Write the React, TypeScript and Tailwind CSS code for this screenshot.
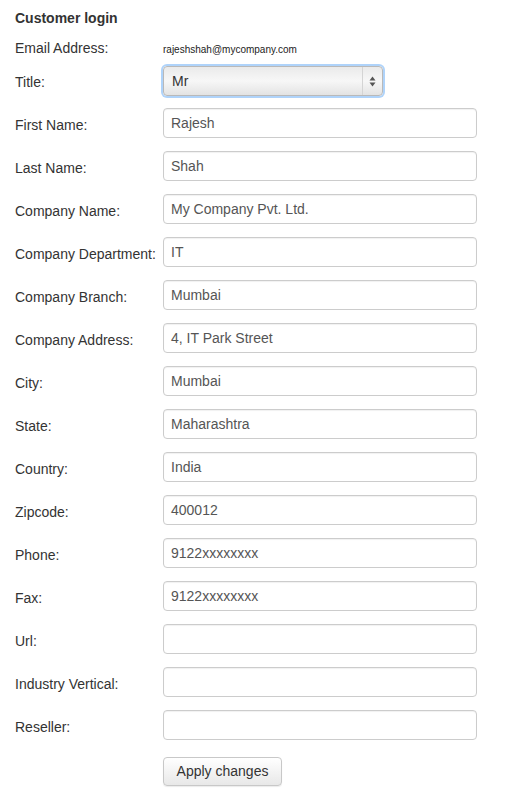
import React from "react";

const rows: [string, string][] = [
  ["First Name:", "Rajesh"],
  ["Last Name:", "Shah"],
  ["Company Name:", "My Company Pvt. Ltd."],
  ["Company Department:", "IT"],
  ["Company Branch:", "Mumbai"],
  ["Company Address:", "4, IT Park Street"],
  ["City:", "Mumbai"],
  ["State:", "Maharashtra"],
  ["Country:", "India"],
  ["Zipcode:", "400012"],
  ["Phone:", "9122xxxxxxxx"],
  ["Fax:", "9122xxxxxxxx"],
  ["Url:", ""],
  ["Industry Vertical:", ""],
  ["Reseller:", ""],
];

export default function App() {
  return (
    <div
      className="w-[507px] min-h-[792px] bg-white text-[#333] text-[14px] leading-[20px]"
      style={{ fontFamily: '"Liberation Sans", Arial, sans-serif' }}
    >
      <div className="pl-[15px] pt-[8px]">
        <div className="font-bold h-[20px]">Customer login</div>
        <div className="mt-[10px] flex items-baseline h-[20px]">
          <div className="w-[148px] shrink-0">Email Address:</div>
          <div className="text-[10px] text-[#222]">rajeshshah@mycompany.com</div>
        </div>
        <div className="mt-[8px] flex items-start h-[30px]">
          <div className="w-[148px] shrink-0 pt-[6px]">Title:</div>
          <div className="relative w-[220px] h-[30px] rounded-[4px] border border-[#b9b9b9] bg-gradient-to-b from-[#eaeaea] via-[#f7f7f7] to-[#e3e3e3] ring-[2px] ring-[#afd3fa] flex items-center">
            <div className="pl-[8px] flex-1 text-[#333]">Mr</div>
            <div className="h-full w-[20px] border-l border-[#d4d4d4] flex items-center justify-center">
              <svg width="7" height="11" viewBox="0 0 7 11">
                <path d="M3.5 0.5 L6.5 4.5 L0.5 4.5 Z" fill="#555" />
                <path d="M3.5 10.5 L6.5 6.5 L0.5 6.5 Z" fill="#555" />
              </svg>
            </div>
          </div>
        </div>
        <div className="mt-[12px] flex flex-col gap-[13px]">
          {rows.map(([label, value]) => (
            <div key={label} className="flex items-start h-[30px]">
              <div className="w-[148px] shrink-0 pt-[7px] whitespace-nowrap">{label}</div>
              <div className="w-[314px] h-[30px] rounded-[4px] border border-[#cccccc] bg-white px-[7px] pt-[4px] text-[#555] shadow-[inset_0_1px_1px_rgba(0,0,0,0.06)]">
                {value}
              </div>
            </div>
          ))}
        </div>
        <div className="mt-[17px] pl-[148px]">
          <button className="h-[29px] w-[119px] rounded-[4px] border border-[#c8c8c8] bg-gradient-to-b from-white to-[#e8e8e8] text-[#333] text-[14px] pb-[1px] shadow-[0_1px_1px_rgba(0,0,0,0.08)]">
            Apply changes
          </button>
        </div>
      </div>
    </div>
  );
}
